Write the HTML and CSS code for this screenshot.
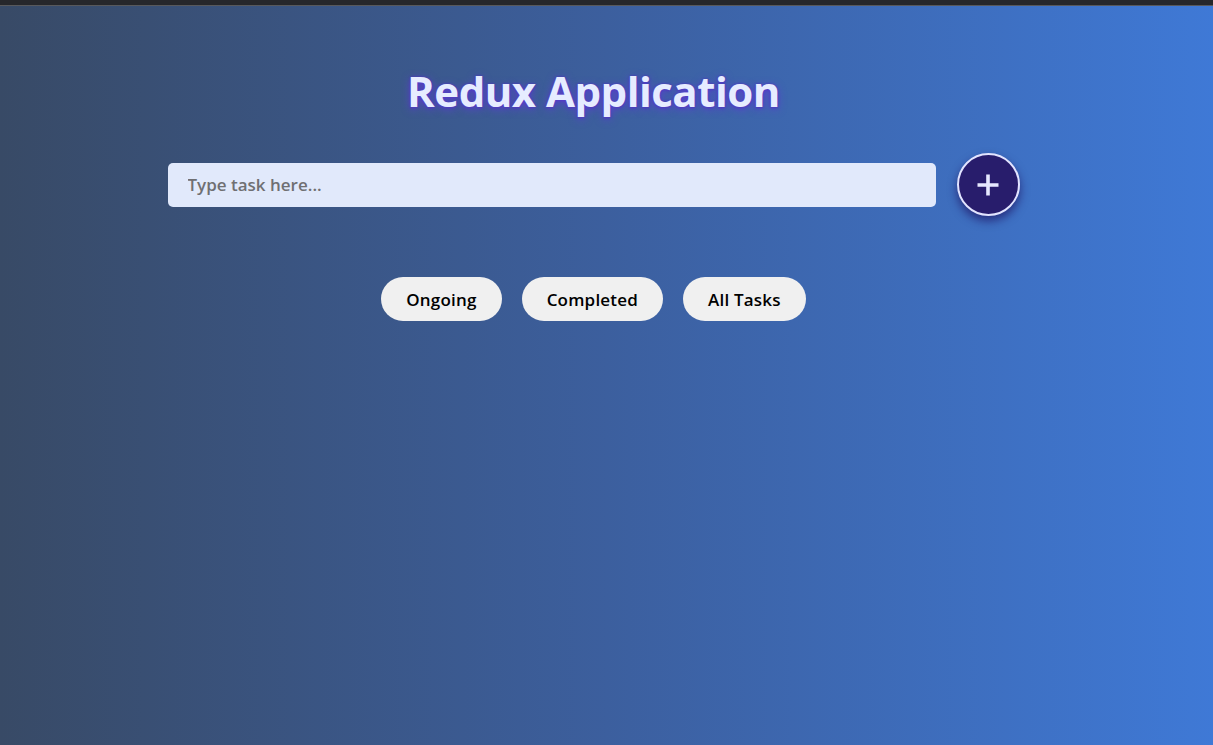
FILE: index.html
```html
<!DOCTYPE html>
<html lang="en">
<head>
<meta charset="utf-8">
<title>Redux Application</title>
<link rel="stylesheet" href="styles.css">
</head>
<body>
<div class="topbar"></div>
<main class="app">
  <h1 class="title">Redux Application</h1>
  <form class="add-row" onsubmit="return false">
    <input class="task-input" type="text" placeholder="Type task here...">
    <button class="add-btn" type="button" aria-label="Add task">
      <svg width="26" height="26" viewBox="0 0 26 26"><path d="M13 2.5v21M2.5 13h21" stroke="#e6e9ff" stroke-width="3.6" stroke-linecap="butt" fill="none"/></svg>
    </button>
  </form>
  <div class="filters">
    <button class="filter" type="button">Ongoing</button>
    <button class="filter" type="button">Completed</button>
    <button class="filter" type="button">All Tasks</button>
  </div>
</main>
</body>
</html>
```

FILE: styles.css
```css
html, body {
  margin: 0;
  padding: 0;
  height: 100%;
}
body {
  background: linear-gradient(to right, #384a66 0%, #3c5f9e 50%, #3f79d6 100%);
  font-family: "Open Sans", "Noto Sans", sans-serif;
  overflow: hidden;
}
.topbar {
  height: 5px;
  background: #26272b;
  border-bottom: 1px solid #58595c;
}
.app {
  display: flex;
  flex-direction: column;
  align-items: center;
  padding-right: 26px;
}
.title {
  margin: 55px 0 0;
  font-family: "Open Sans", sans-serif;
  font-weight: 700;
  font-size: 42px;
  line-height: 60px;
  letter-spacing: -0.5px;
  color: #e6ecff;
  text-shadow: 0 2px 8px #5b3fd0, 0 1px 3px #4a35b8, 0 0 2px #4a35b8;
}
.add-row {
  display: flex;
  align-items: center;
  gap: 21px;
  margin-top: 32px;
}
.task-input {
  width: 768px;
  height: 44px;
  box-sizing: border-box;
  border: none;
  border-radius: 5px;
  background: #e1e9fb;
  padding: 0 20px;
  font-family: "Open Sans", sans-serif;
  font-weight: 600;
  font-size: 17px;
  color: #333;
  outline: none;
}
.task-input::placeholder {
  color: #6f6f72;
}
.add-btn {
  width: 63px;
  height: 63px;
  border-radius: 50%;
  border: 2px solid #e2e4ff;
  background: #281d6c;
  box-shadow: 0 5px 10px rgba(30, 20, 100, 0.7);
  display: flex;
  align-items: center;
  justify-content: center;
  padding: 0;
  cursor: pointer;
}
.filters {
  display: flex;
  gap: 20px;
  margin-top: 61px;
}
.filter {
  height: 44px;
  padding: 0 25px;
  border: none;
  border-radius: 22px;
  background: #f0f0f0;
  font-family: "Open Sans", sans-serif;
  font-weight: 600;
  font-size: 17px;
  letter-spacing: 0.2px;
  color: #000;
  cursor: pointer;
}
```
